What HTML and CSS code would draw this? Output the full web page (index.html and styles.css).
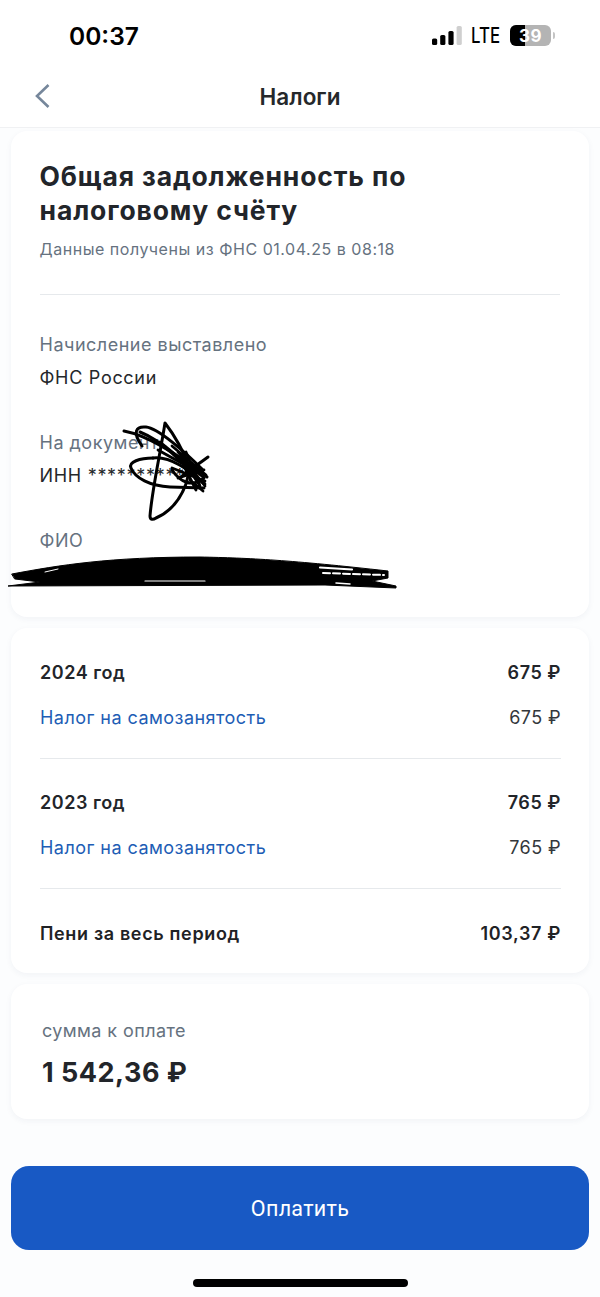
FILE: index.html
```html
<!DOCTYPE html>
<html lang="ru">
<head>
<meta charset="utf-8">
<title>Налоги</title>
<link rel="stylesheet" href="styles.css">
</head>
<body>
<div class="screen">
  <div class="status">
    <span class="time">00:37</span>
    <div class="status-right">
      <svg class="signal" width="30" height="20" viewBox="0 0 30 20"><rect x="0" y="12.5" width="5.2" height="6.5" rx="1.6" fill="#000"/><rect x="8.2" y="9" width="5.2" height="10" rx="1.6" fill="#000"/><rect x="16.4" y="5" width="5.2" height="14" rx="1.6" fill="#000"/><rect x="24.6" y="0" width="5.2" height="19" rx="1.6" fill="#cfcfcf"/></svg>
      <span class="lte">LTE</span>
      <div class="battery"><div class="battery-fill"></div><span class="battery-text">39</span></div>
      <div class="battery-cap"></div>
    </div>
  </div>
  <header class="nav">
    <svg class="back" width="18" height="26" viewBox="0 0 18 26"><path d="M14.5 2 L3 13 L14.5 24" fill="none" stroke="#76879b" stroke-width="2.6"/></svg>
    <h1 class="nav-title">Налоги</h1>
  </header>
  <main class="content">
    <section class="card card-info">
      <h2 class="title">Общая задолженность по налоговому счёту</h2>
      <p class="meta">Данные получены из ФНС 01.04.25 в 08:18</p>
      <hr class="divider divider-top">
      <div class="field">
        <div class="label">Начисление выставлено</div>
        <div class="value">ФНС России</div>
      </div>
      <div class="field">
        <div class="label">На документ</div>
        <div class="value">ИНН ************</div>
      </div>
      <div class="field field-last">
        <div class="label">ФИО</div>
        <div class="value">&nbsp;</div>
      </div>
      <svg class="scribble" width="600" height="620" viewBox="0 0 600 620" fill="none" stroke="#000" stroke-linecap="round" stroke-linejoin="round">
        <g stroke-width="3">
          <path d="M124 431 C150 436 185 460 207 477"/>
          <path d="M142 446 C132 432 136 426 146 427 C158 428 185 452 203 470"/>
          <path d="M140 432 C160 440 185 462 199 484"/>
          <path d="M165 423 C160 455 152 490 150 516 C150 520 153 520 156 518 C170 512 180 500 186 484 L190 468 C182 448 172 432 165 423 Z"/>
          <path d="M153 458 C140 458 128 462 131 468 C135 478 150 486 170 487 L204 488"/>
          <path d="M153 458 C170 456 190 470 204 484"/>
          <path d="M208 457 C196 466 186 472 180 478"/>
          <path d="M172 470 C180 482 192 488 204 478"/>
        </g>
        <g stroke-width="2.8">
          <path d="M160 442 L203 477 M165 446 L205 484 M172 446 L206 475 M180 458 L196 490 M172 468 L205 481 M186 452 L200 486 M178 478 L204 470 M190 480 L203 491 M158 450 L194 470 M178 452 L205 486"/>
        </g>
      </svg>
      <svg class="scribble" width="600" height="620" viewBox="0 0 600 620" fill="#000" stroke="#000" stroke-linecap="round">
        <path d="M12 574 C60 565 110 557 200 557 C250 558 290 560 388 571 L388 578 L372 581 L396 586 L396 588 L325 585 L8 586 L40 582 L15 579 Z" stroke-width="1"/>
        <path d="M320 567.5 L352 569.5" stroke="#fff" stroke-width="2.2"/>
        <path d="M323 573 L384 575" stroke="#fff" stroke-width="2" stroke-dasharray="7 3"/>
        <path d="M336 583 L350 584" stroke="#fff" stroke-width="1.5"/>
        <path d="M145 581 L205 581" stroke="#fff" stroke-width="1.2"/>
        <path d="M45 572 L58 569" stroke="#fff" stroke-width="1"/>
      </svg>
    </section>
    <section class="card card-list">
      <div class="row row-year"><span>2024 год</span><span>675 ₽</span></div>
      <div class="row row-item"><a class="link">Налог на самозанятость</a><span>675 ₽</span></div>
      <hr class="divider divider-list">
      <div class="row row-year"><span>2023 год</span><span>765 ₽</span></div>
      <div class="row row-item"><a class="link">Налог на самозанятость</a><span>765 ₽</span></div>
      <hr class="divider divider-list">
      <div class="row row-penalty"><span>Пени за весь период</span><span>103,37 ₽</span></div>
    </section>
    <section class="card card-total">
      <div class="total-label">сумма к оплате</div>
      <div class="total-value">1 542,36 ₽</div>
    </section>
    <button class="pay">Оплатить</button>
  </main>
  <div class="home-wrap"><div class="home"></div></div>
</div>
</body>
</html>
```

FILE: styles.css
```css
* { box-sizing: border-box; }
html, body { margin: 0; padding: 0; background: #fff; }
body { font-family: Inter, "Liberation Sans", sans-serif; color: #1f2225; }
.screen { width: 600px; height: 1297px; overflow: hidden; display: flex; flex-direction: column; background: #fcfdfe; }
.status { height: 68px; background: #fff; display: flex; justify-content: space-between; align-items: center; padding: 3px 45px 0 69px; }
.time { font-size: 24.5px; font-weight: 600; color: #000; letter-spacing: 0; }
.status-right { display: flex; align-items: center; height: 20px; }
.signal { margin-right: 9px; }
.lte { font-size: 21px; font-weight: 500; color: #000; transform: scaleX(.8); transform-origin: left; width: 39px; }
.battery { width: 41px; height: 21px; background: #b4b4b4; border-radius: 6px; position: relative; overflow: hidden; display: flex; align-items: center; justify-content: center; }
.battery-fill { position: absolute; left: 0; top: 0; bottom: 0; width: 15px; background: #000; }
.battery-text { position: relative; font-size: 17px; font-weight: 700; color: #fff; letter-spacing: .5px; }
.battery-cap { width: 2px; height: 7px; background: #c4c4c4; border-radius: 0 2px 2px 0; margin-left: 2px; }
.nav { height: 60px; background: #fff; border-bottom: 1px solid #f0f1f3; display: flex; align-items: center; justify-content: center; position: relative; padding-bottom: 2px; }
.back { position: absolute; left: 34px; top: 15px; }
.nav-title { margin: 0; font-size: 22.5px; font-weight: 600; color: #25282b; line-height: 26px; }
.content { flex: 1; display: flex; flex-direction: column; padding: 3px 11px 0; }
.card { background: #fff; border-radius: 16px; box-shadow: 0 2px 6px rgba(40, 60, 90, .05); margin-bottom: 11px; position: relative; }
.card-info { height: 486px; padding: 29px 29px 0 28.5px; }
.title { margin: 0; max-width: 420px; font-size: 26.5px; line-height: 33.5px; font-weight: 700; color: #22252a; letter-spacing: .88px; }
.meta { margin: 11px 0 0; font-size: 16px; line-height: 22px; color: #66727f; letter-spacing: .53px; }
.divider { border: 0; height: 1px; background: #e6e9ec; margin: 0; }
.divider-top { margin: 34px 0 37px; }
.field { margin-bottom: 39px; }
.field-last { margin-bottom: 0; }
.label { font-size: 18px; line-height: 26px; color: #66727f; letter-spacing: .5px; }
.value { margin-top: 7px; font-size: 18px; line-height: 26px; color: #25282b; letter-spacing: .7px; }
.scribble { position: absolute; left: -11px; top: -131px; pointer-events: none; }
.card-list { height: 345px; padding: 31px 28px 0 29px; }
.row { display: flex; justify-content: space-between; align-items: center; font-size: 18px; line-height: 28px; }
.row-year { font-weight: 600; color: #22252a; letter-spacing: .55px; }
.row-item { margin-top: 17px; color: #33373b; letter-spacing: .4px; }
.link { color: #1d5db5; letter-spacing: .46px; }
.divider-list { margin: 26px 0 30px; }
.row-penalty { margin-top: 31px; font-weight: 600; font-size: 18px; letter-spacing: .65px; }
.card-total { height: 135px; padding: 34px 31px 0; }
.total-label { font-size: 18px; line-height: 26px; color: #66727f; letter-spacing: .4px; }
.total-value { margin-top: 10px; font-size: 27px; line-height: 38px; font-weight: 700; color: #22252a; letter-spacing: .5px; }
.pay { margin-top: 36px; height: 84px; padding-top: 2px; border: 0; border-radius: 18px; background: #1859c4; color: #fff; font: 400 21.5px Roboto, sans-serif; letter-spacing: .3px; }
.home-wrap { height: 47px; display: flex; justify-content: center; padding-top: 29px; }
.home { width: 215px; height: 8px; background: #000; border-radius: 4px; }
```
